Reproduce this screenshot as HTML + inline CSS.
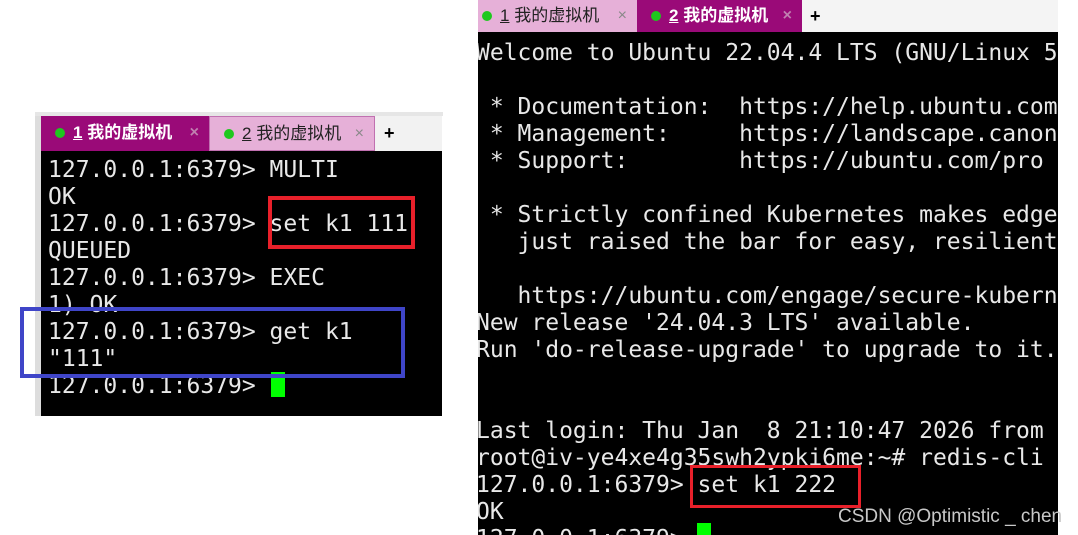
<!DOCTYPE html><html><head><meta charset="utf-8"><style>
body{margin:0;width:1078px;height:535px;background:#fff;position:relative;overflow:hidden;font-family:"DejaVu Sans Mono","Liberation Mono",monospace}
.abs{position:absolute}
.term{background:#000;color:#e8e8e8;font-size:23px;line-height:27px;white-space:pre;overflow:hidden}
.tab{position:absolute;font-family:"Liberation Sans","Noto Sans CJK SC",sans-serif;font-size:17px;line-height:34px;box-sizing:border-box;white-space:nowrap}
.dot{display:inline-block;width:10px;height:10px;border-radius:50%;background:#1ec81e;margin:0 8px 0 14px;vertical-align:0px}
.x{position:absolute;right:10px;color:#888;font-size:16px}
.box{position:absolute;box-sizing:border-box}
</style></head><body>
<div class="abs" style="left:35px;top:112px;width:408px;height:4px;background:#e6e6e6"></div>
<div class="abs" style="left:35px;top:116px;width:6px;height:300px;background:#ddd"></div>
<div class="tab" style="left:41px;top:116px;width:168px;height:35px;background:#9a0a78;color:#fff;font-weight:bold"><span class="dot"></span><u>1</u> 我的虚拟机<span class="x" style="color:#c080b0">×</span></div>
<div class="tab" style="left:209px;top:116px;width:166px;height:35px;background:#e6b0d8;color:#222;border:1px solid #c070b0"><span class="dot"></span><u>2</u> 我的虚拟机<span class="x">×</span></div>
<div class="tab" style="left:375px;top:116px;width:67px;height:35px;background:#f2f2f2;color:#000;font-weight:bold;padding-left:9px;font-size:18px">+</div>
<div class="abs term" style="left:41px;top:151px;width:401px;height:265px;padding-left:7px;box-sizing:border-box;padding-top:6px">127.0.0.1:6379&gt; MULTI
OK
127.0.0.1:6379&gt; set k1 111
QUEUED
127.0.0.1:6379&gt; EXEC
1) OK
127.0.0.1:6379&gt; get k1
"111"
127.0.0.1:6379&gt; </div>
<div class="abs" style="left:271px;top:372px;width:14px;height:25px;background:#00ff00"></div>
<div class="box" style="left:268px;top:196px;width:147px;height:53px;border:4px solid #e8202a"></div>
<div class="box" style="left:20px;top:307px;width:385px;height:71px;border:4px solid #3f45c8"></div>

<div class="tab" style="left:478px;top:0;width:159px;height:32px;line-height:32px;background:#e6b0d8;color:#222"><span class="dot" style="margin-left:4px"></span><u>1</u> 我的虚拟机<span class="x">×</span></div>
<div class="tab" style="left:637px;top:0;width:165px;height:32px;line-height:32px;background:#9a0a78;color:#fff;font-weight:bold"><span class="dot"></span><u>2</u> 我的虚拟机<span class="x" style="color:#c080b0">×</span></div>
<div class="tab" style="left:802px;top:0;width:256px;height:32px;line-height:32px;background:#f4f4f4;color:#000;font-weight:bold;padding-left:8px;font-size:18px">+</div>
<div class="abs term" style="left:478px;top:32px;width:580px;height:503px"><div style="position:absolute;left:-2px;top:8px">Welcome to Ubuntu 22.04.4 LTS (GNU/Linux 5

 * Documentation:  https://help.ubuntu.com
 * Management:     https://landscape.canonical
 * Support:        https://ubuntu.com/pro

 * Strictly confined Kubernetes makes edge
   just raised the bar for easy, resilient

   https://ubuntu.com/engage/secure-kubern
New release '24.04.3 LTS' available.
Run 'do-release-upgrade' to upgrade to it.


Last login: Thu Jan  8 21:10:47 2026 from
root@iv-ye4xe4g35swh2ypki6me:~# redis-cli
127.0.0.1:6379&gt; set k1 222
OK
127.0.0.1:6379&gt; </div></div>
<div class="abs" style="left:697px;top:523px;width:14px;height:12px;background:#00ff00"></div>
<div class="box" style="left:690px;top:465px;width:171px;height:43px;border:3px solid #e8202a"></div>
<div class="abs" style="left:838px;top:506px;font-family:'Liberation Sans',sans-serif;font-size:19px;color:#c8c8c8;white-space:nowrap">CSDN @Optimistic _ chen</div>
</body></html>
